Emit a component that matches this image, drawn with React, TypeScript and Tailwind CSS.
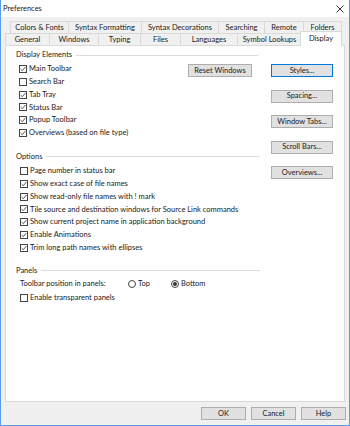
import React from "react";

function Check({ checked, label }: { checked?: boolean; label: string }) {
  return (
    <div className="flex items-center h-[12.8px]">
      <span className="w-[8px] h-[8px] border border-[#444444] bg-white flex items-center justify-center shrink-0">
        {checked && (
          <svg width="6" height="6" viewBox="0 0 6 6">
            <path d="M0.6 3.1 L2.3 4.7 L5.4 1" stroke="#444444" fill="none" strokeWidth="0.9" />
          </svg>
        )}
      </span>
      <span className="ml-[2px] text-[7.5px] leading-none whitespace-nowrap">{label}</span>
    </div>
  );
}

function Btn({ label, focus, className = "" }: { label: string; focus?: boolean; className?: string }) {
  return (
    <div
      className={
        "h-[13px] border bg-[#e1e1e1] flex items-center justify-center text-[7.5px] leading-none whitespace-nowrap " +
        (focus ? "border-[#0078d7] " : "border-[#adadad] ") +
        className
      }
    >
      {label}
    </div>
  );
}

function Header({ label, right = 0 }: { label: string; right?: number }) {
  return (
    <div className="flex items-center h-[10px]" style={{ marginRight: right }}>
      <span className="text-[7.5px] leading-none whitespace-nowrap">{label}</span>
      <span className="flex-1 ml-[4px] h-px bg-[#dcdcdc]" />
    </div>
  );
}

function Tab({ label, w }: { label: string; w: number }) {
  return (
    <div
      className="h-[12px] border-t border-l border-r border-[#d9d9d9] bg-[#f0f0f0] flex items-center justify-center text-[7.5px] leading-none whitespace-nowrap -mr-px"
      style={{ width: w + 1 }}
    >
      {label}
    </div>
  );
}

function Radio({ checked, label }: { checked?: boolean; label: string }) {
  return (
    <div className="flex items-center">
      <span className="w-[8px] h-[8px] rounded-full border border-[#444444] bg-white flex items-center justify-center">
        {checked && <span className="w-[4px] h-[4px] rounded-full bg-[#333333]" />}
      </span>
      <span className="ml-[2px] text-[7.5px] leading-none">{label}</span>
    </div>
  );
}

export default function App() {
  return (
    <div className="w-[350px] h-[426px] bg-[#f0f0f0] border-x border-b border-[#5a9be6] flex flex-col overflow-hidden text-[#1a1a1a] font-['Lato','Noto_Sans',sans-serif]">
      {/* title bar */}
      <div className="h-[17px] bg-white flex items-center justify-between pl-[2px] pr-[5px] shrink-0">
        <span className="text-[7.5px] leading-none">Preferences</span>
        <svg width="8" height="8" viewBox="0 0 8 8">
          <path d="M0.5 0.5 L7.5 7.5 M7.5 0.5 L0.5 7.5" stroke="#222" strokeWidth="0.9" />
        </svg>
      </div>
      {/* tabs */}
      <div className="mt-[4px] flex ml-[9px] shrink-0">
        <Tab label="Colors & Fonts" w={58} />
        <Tab label="Syntax Formatting" w={73} />
        <Tab label="Syntax Decorations" w={77} />
        <Tab label="Searching" w={46} />
        <Tab label="Remote" w={39} />
        <Tab label="Folders" w={38} />
      </div>
      <div className="flex items-end ml-[4px] h-[12px] shrink-0 relative z-10">
        <Tab label="General" w={44} />
        <Tab label="Windows" w={49} />
        <Tab label="Typing" w={42} />
        <Tab label="Files" w={40} />
        <Tab label="Languages" w={57} />
        <Tab label="Symbol Lookups" w={64} />
        <div className="h-[15px] w-[42px] -ml-[1px] -mb-px border-t border-l border-r border-[#d9d9d9] bg-white flex items-start pt-[2.5px] justify-center text-[7.5px] leading-none">
          Display
        </div>
      </div>
      {/* panel */}
      <div className="ml-[4px] w-[340px] h-[357px] bg-white border border-[#d9d9d9] shrink-0">
        <div className="flex">
          <div className="ml-[10px] w-[244px] flex flex-col">
            <div className="mt-[4px]">
              <Header label="Display Elements" right={2} />
            </div>
            <div className="flex mt-[2.6px]">
              <div className="pl-[3px] flex flex-col">
                <Check checked label="Main Toolbar" />
                <Check label="Search Bar" />
                <Check checked label="Tab Tray" />
                <Check checked label="Status Bar" />
                <Check checked label="Popup Toolbar" />
                <Check checked label="Overviews (based on file type)" />
              </div>
              <div className="ml-auto mr-[8px] mt-[1.4px]">
                <Btn label="Reset Windows" className="w-[64px]" />
              </div>
            </div>
            <div className="mt-[12.6px]">
              <Header label="Options" />
            </div>
            <div className="mt-[2.6px] pl-[4px] flex flex-col">
              <Check label="Page number in status bar" />
              <Check checked label="Show exact case of file names" />
              <Check checked label="Show read-only file names with ! mark" />
              <Check checked label="Tile source and destination windows for Source Link commands" />
              <Check checked label="Show current project name in application background" />
              <Check checked label="Enable Animations" />
              <Check checked label="Trim long path names with ellipses" />
            </div>
          </div>
          <div className="ml-[11px] w-[62px] mt-[18px] flex flex-col gap-[12.5px]">
            <Btn label="Styles..." focus />
            <Btn label="Spacing..." />
            <Btn label="Window Tabs..." />
            <Btn label="Scroll Bars..." />
            <Btn label="Overviews..." />
          </div>
        </div>
        <div className="ml-[10px] w-[244px] mt-[11.5px]">
          <Header label="Panels" />
        </div>
        <div className="ml-[14px] mt-[2px] flex items-center h-[12px]">
          <span className="w-[108px] text-[7.5px] leading-none">Toolbar position in panels:</span>
          <div className="w-[43px]">
            <Radio label="Top" />
          </div>
          <Radio checked label="Bottom" />
        </div>
        <div className="ml-[14px] mt-[1.6px]">
          <Check label="Enable transparent panels" />
        </div>
      </div>
      {/* bottom buttons */}
      <div className="mt-[5px] flex justify-end gap-[5px] mr-[3px]">
        <Btn label="OK" className="w-[45px]" />
        <Btn label="Cancel" className="w-[45px]" />
        <Btn label="Help" className="w-[45px]" />
      </div>
    </div>
  );
}
